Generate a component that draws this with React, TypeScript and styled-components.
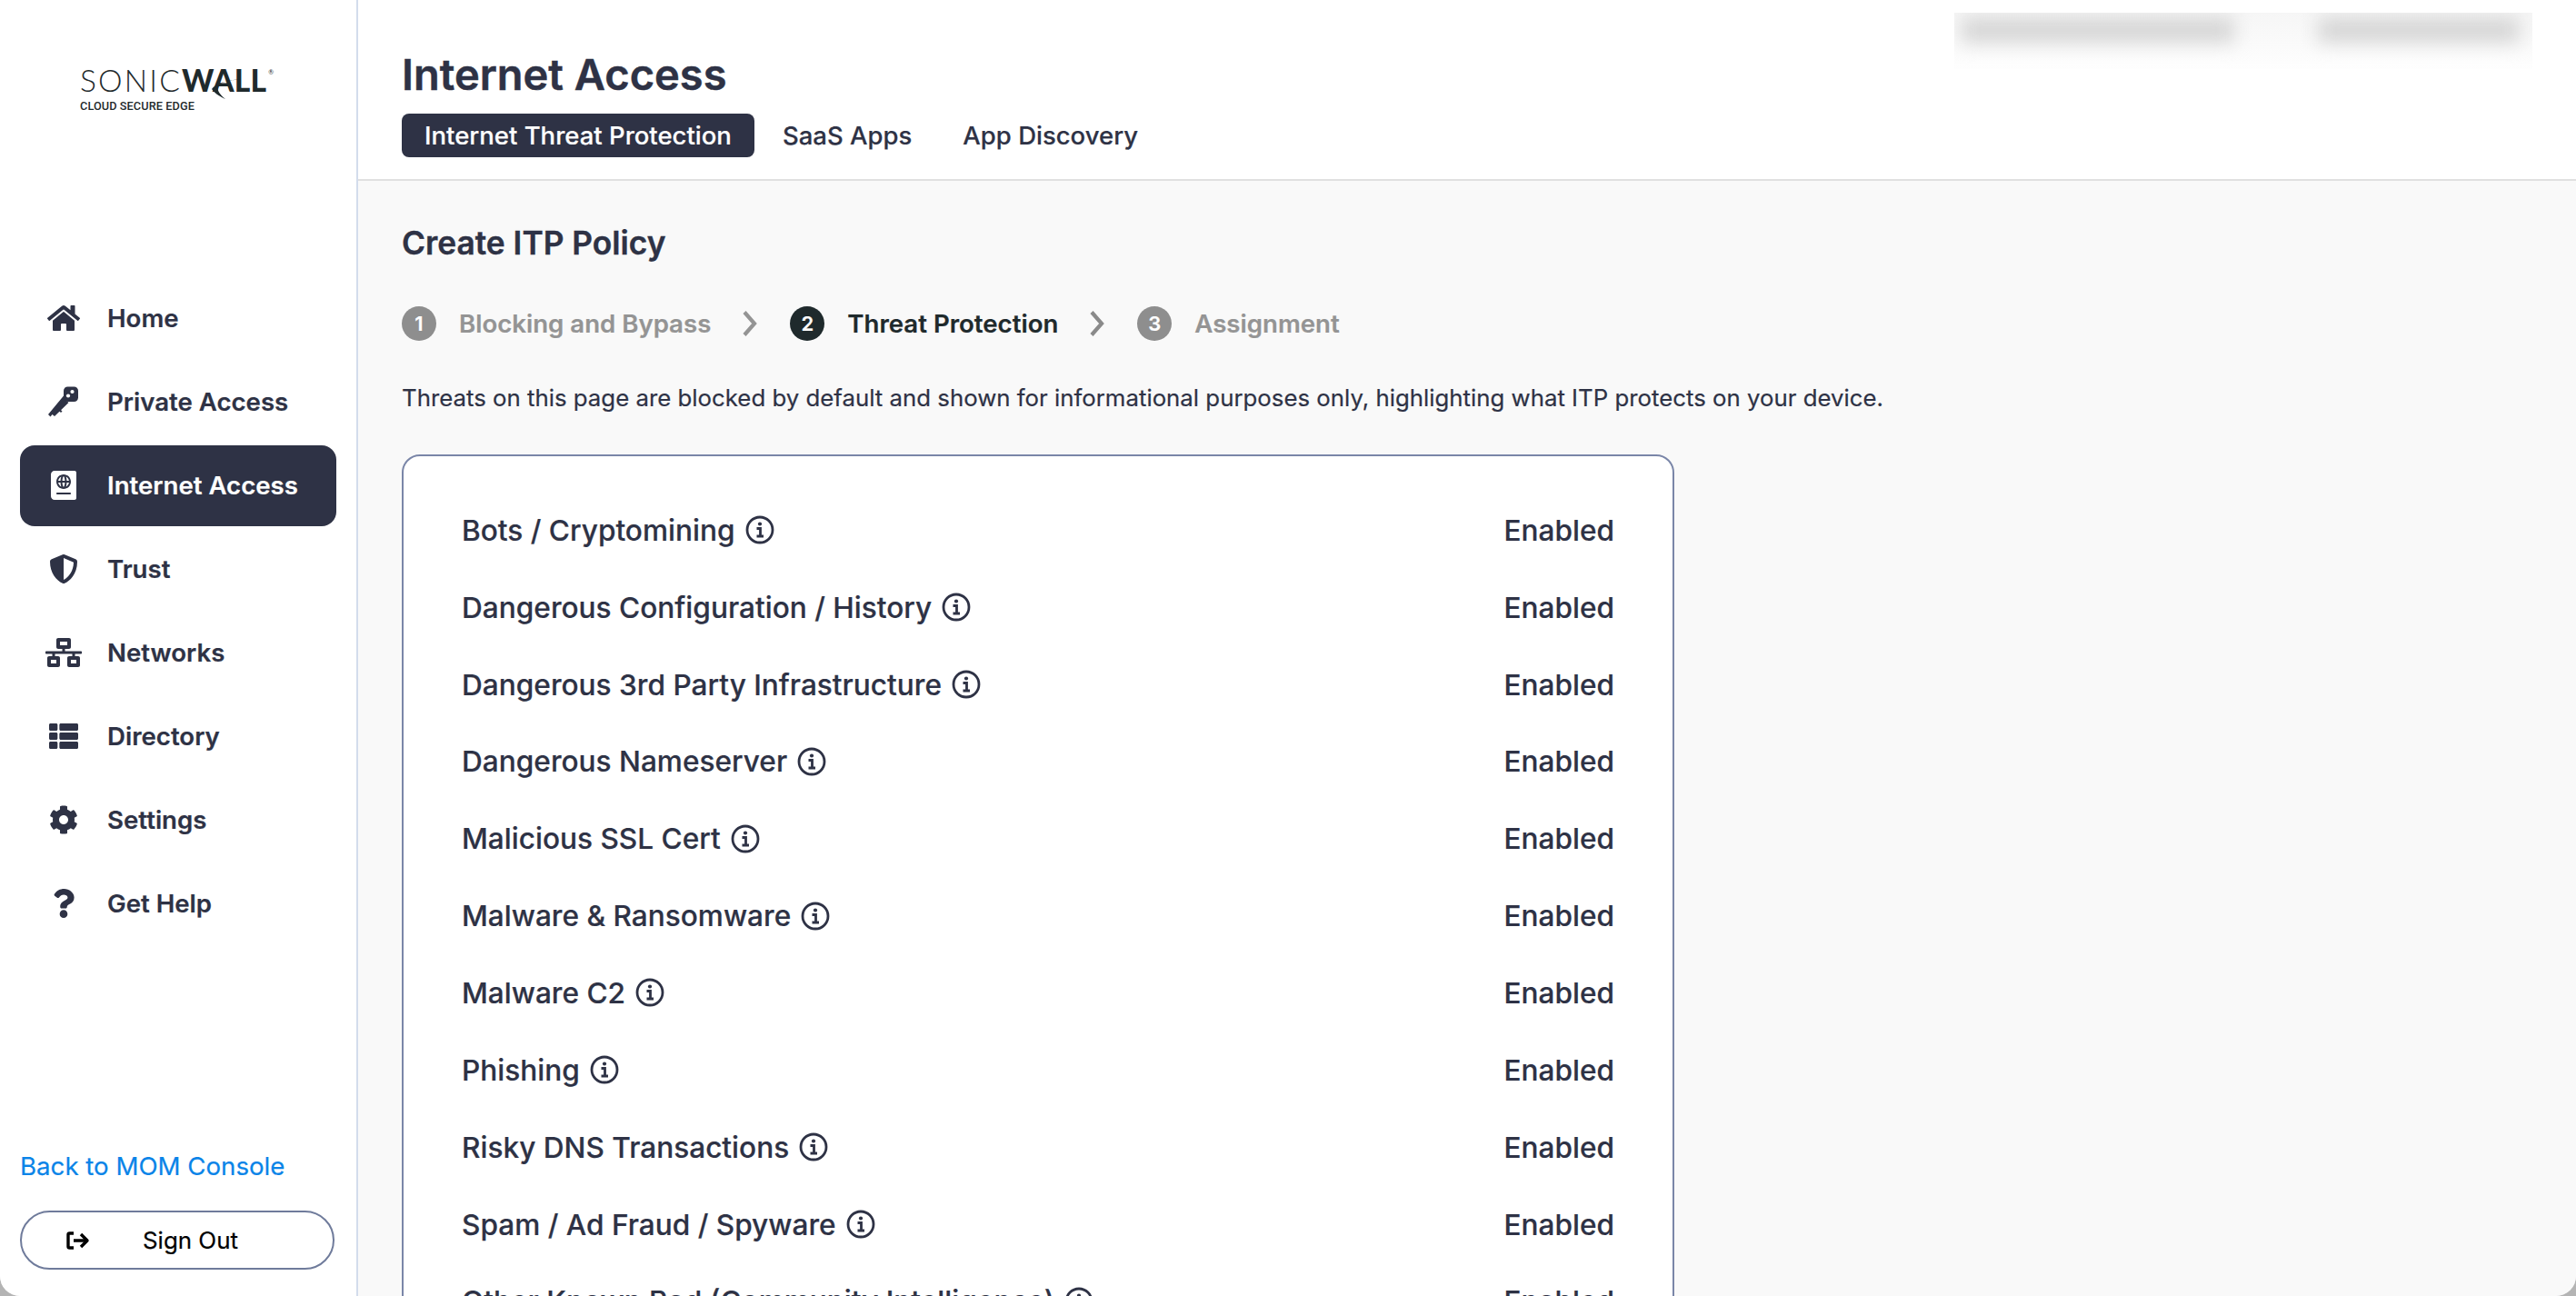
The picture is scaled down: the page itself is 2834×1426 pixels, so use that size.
import React from 'react';
import styled, { createGlobalStyle } from 'styled-components';
import { FaHome, FaPassport, FaShieldAlt, FaNetworkWired, FaThList, FaCog, FaQuestion } from 'react-icons/fa';

const Global = createGlobalStyle`
  html, body { margin: 0; padding: 0; height: 100%; overflow: hidden; background: #b4b4b4; }
  #root { height: 100%; }
  * { box-sizing: border-box; }
  body { font-family: Inter, "Liberation Sans", sans-serif; -webkit-text-stroke: 0.2px; }
`;

const Window = styled.div`
  display: flex;
  height: 1426px;
  width: 2834px;
  background: #fff;
  overflow: hidden;
  border-radius: 0 0 22px 22px;
  box-shadow: inset 0 0 0 0.5px #00000020;
`;

const Sidebar = styled.aside`
  flex: 0 0 394px;
  display: flex;
  flex-direction: column;
  background: #fff;
  border-right: 2px solid #d3dcec;
  padding: 0 22px;
`;

const LogoArea = styled.div`
  height: 306px;
  padding: 70px 0 0 66px;
  color: #1f2a2c;
  -webkit-text-stroke: 0;
`;

const LogoMark = styled.div`
  position: relative;
  display: flex;
  align-items: baseline;
  font-family: Lato, sans-serif;
  font-size: 33.5px;
  line-height: 36px;
  height: 36px;
`;

const LogoThin = styled.span`
  font-weight: 300;
  letter-spacing: 2.2px;
`;

const LogoBold = styled.span`
  font-weight: 900;
  letter-spacing: 0.2px;
`;

const LogoMarkR = styled.sup`
  font-size: 7px;
  line-height: 7px;
  font-weight: 400;
  align-self: flex-start;
  margin: 6px 0 0 2px;
`;

const Swoosh = styled.svg`
  position: absolute;
  left: 144px;
  top: 17px;
`;

const LogoSub = styled.div`
  font-family: Roboto, sans-serif;
  font-size: 12.7px;
  font-weight: 500;
  line-height: 16px;
  margin-top: 3px;
  letter-spacing: 0.1px;
`;

const Nav = styled.nav`
  display: flex;
  flex-direction: column;
  gap: 3px;
`;

const NavItem = styled.div<{ $active?: boolean }>`
  display: flex;
  align-items: center;
  height: 89px;
  width: 348px;
  padding: 0 0 1px 26px;
  gap: 26px;
  border-radius: 16px;
  font-size: 27.6px;
  font-weight: 600;
  color: ${p => (p.$active ? '#fff' : '#2e3245')};
  background: ${p => (p.$active ? '#2e3245' : 'transparent')};
`;

const NavIcon = styled.span`
  flex: 0 0 44px;
  display: flex;
  align-items: center;
  justify-content: center;
`;

const SideFooter = styled.div`
  margin-top: auto;
  padding-bottom: 29px;
`;

const BackLink = styled.a`
  display: block;
  font-size: 27.65px;
  line-height: 34px;
  color: #0a84e8;
  margin-bottom: 32px;
`;

const SignOut = styled.button`
  display: flex;
  align-items: center;
  width: 346px;
  height: 65px;
  padding: 0 0 0 49px;
  gap: 58px;
  background: #fff;
  border: 2px solid #6f7b9b;
  border-radius: 33px;
  font-family: inherit;
  font-size: 25.9px;
  color: #000;
`;

const Main = styled.main`
  flex: 1;
  min-width: 0;
  display: flex;
  flex-direction: column;
  background: #f9f9f9;
`;

const Header = styled.header`
  flex: 0 0 199px;
  display: flex;
  justify-content: space-between;
  background: #fff;
  border-bottom: 2px solid #e0e0e0;
  padding-left: 48px;
`;

const HeaderLeft = styled.div`
  display: flex;
  flex-direction: column;
`;

const Title = styled.h1`
  margin: 50px 0 0;
  font-size: 47px;
  line-height: 64px;
  font-weight: 600;
  color: #2e3245;
  -webkit-text-stroke: 0.5px;
`;

const Tabs = styled.div`
  display: flex;
  align-items: center;
  margin-top: 11px;
`;

const Tab = styled.div<{ $active?: boolean }>`
  height: 48px;
  display: flex;
  align-items: center;
  padding: 0 25px;
  margin-right: 6px;
  border-radius: 8px;
  font-size: 27.5px;
  font-weight: 500;
  color: ${p => (p.$active ? '#fff' : '#2e3245')};
  background: ${p => (p.$active ? '#2e3245' : 'transparent')};
`;

const BlurClip = styled.div`
  width: 636px;
  height: 62px;
  margin: 14px 48px 0 0;
  overflow: hidden;
  background: linear-gradient(#f6f6f6, #fefefe);
`;

const BlurRow = styled.div`
  display: flex;
  gap: 92px;
  padding: 5px 0 0 8px;
  filter: blur(10px);
`;

const BlurBar = styled.div<{ $w: number }>`
  width: ${p => p.$w}px;
  height: 28px;
  background: #d6d6d6;
`;

const Content = styled.div`
  flex: 1;
  min-height: 0;
  padding: 46px 0 0 48px;
`;

const SubTitle = styled.h2`
  margin: 0;
  font-size: 35.3px;
  line-height: 46px;
  font-weight: 600;
  color: #2e3245;
  -webkit-text-stroke: 0.4px;
`;

const Stepper = styled.div`
  display: flex;
  align-items: center;
  margin-top: 46px;
  height: 38px;
`;

const Step = styled.div<{ $active?: boolean }>`
  display: flex;
  align-items: center;
  gap: 25px;
  font-size: 27.6px;
  font-weight: 600;
  color: ${p => (p.$active ? '#1f2a2c' : '#949494')};
`;

const StepNum = styled.span<{ $active?: boolean }>`
  width: 38px;
  height: 38px;
  border-radius: 50%;
  display: flex;
  align-items: center;
  justify-content: center;
  font-size: 22px;
  font-weight: 600;
  color: #fff;
  background: ${p => (p.$active ? '#1f2a2c' : '#8e8e8e')};
`;

const StepChevron = styled.svg`
  margin: 0 35px 0 34px;
`;

const Description = styled.p`
  margin: 45px 0 0;
  font-size: 25.8px;
  line-height: 36px;
  font-weight: 400;
  color: #2e3245;
`;

const Card = styled.section`
  margin-top: 44px;
  width: 1400px;
  background: #fff;
  border: 2px solid #7a86a8;
  border-radius: 20px;
  padding: 39px 64px 30px 64px;
`;

const Row = styled.div`
  display: flex;
  align-items: center;
  justify-content: space-between;
  height: 84.85px;
  font-size: 31.6px;
  font-weight: 500;
  color: #2e3245;
`;

const RowLabel = styled.div`
  display: flex;
  align-items: center;
  gap: 11px;
`;

const Key = () => (
  <svg width="34" height="34" viewBox="0 0 34 34" fill="#2e3245">
    <rect x="17" y="0.500" width="16" height="16.500" rx="4.500" />
    <path d="M17 10.500L20 16 22.500 18 7 33l-2.500-2-2 2.500L0 31Z" />
    <path d="M11 23.500l4.500 4-1.500 1.500-4.500-4Z" />
    <circle cx="26.500" cy="6" r="2.100" fill="#fff" />
    <circle cx="22" cy="10.500" r="2.100" fill="#fff" />
  </svg>
);

const Exit = () => (
  <svg width="26" height="24" viewBox="0 0 26 24" fill="none" stroke="#000" strokeWidth="3.400">
    <path d="M8 4H3.500C2.500 4 2 4.500 2 5.500v13c0 1 .5 1.500 1.500 1.500H8" />
    <path d="M8 12h15" />
    <path d="M16 5l7 7-7 7" strokeLinejoin="round" />
  </svg>
);

const Info = () => (
  <svg width="32" height="32" viewBox="0 0 32 32" fill="none" stroke="#2e3245">
    <circle cx="16" cy="16" r="14" strokeWidth="2.800" />
    <circle cx="16" cy="9.500" r="2.100" fill="#2e3245" stroke="none" />
    <path d="M12.500 14.500H16.500V22.500M12.500 23H20" strokeWidth="2.800" />
  </svg>
);

const Chevron = ({ color }: { color: string }) => (
  <StepChevron width="18" height="28" viewBox="0 0 18 28" fill="none" stroke={color} strokeWidth="4.200">
    <path d="M3 1.500l11 12.500L3 26.500" />
  </StepChevron>
);

const navItems: { label: string; icon: React.ReactNode; active?: boolean }[] = [
  { label: 'Home', icon: <FaHome size={36} /> },
  { label: 'Private Access', icon: <Key /> },
  { label: 'Internet Access', icon: <FaPassport size={32} />, active: true },
  { label: 'Trust', icon: <FaShieldAlt size={32} /> },
  { label: 'Networks', icon: <FaNetworkWired size={40} /> },
  { label: 'Directory', icon: <FaThList size={32} /> },
  { label: 'Settings', icon: <FaCog size={32} /> },
  { label: 'Get Help', icon: <FaQuestion size={32} /> },
];

const threats = [
  'Bots / Cryptomining',
  'Dangerous Configuration / History',
  'Dangerous 3rd Party Infrastructure',
  'Dangerous Nameserver',
  'Malicious SSL Cert',
  'Malware & Ransomware',
  'Malware C2',
  'Phishing',
  'Risky DNS Transactions',
  'Spam / Ad Fraud / Spyware',
  'Other Known Bad (Community Intelligence)',
];

export default function App() {
  return (
    <>
      <Global />
      <Window>
        <Sidebar>
          <LogoArea>
            <LogoMark>
              <LogoThin>SONIC</LogoThin>
              <LogoBold>WALL</LogoBold>
              <LogoMarkR>®</LogoMarkR>
              <Swoosh width="34" height="22" viewBox="0 0 34 22" fill="#1f2a2c">
                <path d="M34 0C24 1 14 2 9 6 6 9 7 15 16 22 12 20 4 16 1 11 5 5 18 1 34 0Z" />
              </Swoosh>
            </LogoMark>
            <LogoSub>CLOUD SECURE EDGE</LogoSub>
          </LogoArea>
          <Nav>
            {navItems.map(n => (
              <NavItem key={n.label} $active={n.active}>
                <NavIcon>{n.icon}</NavIcon>
                {n.label}
              </NavItem>
            ))}
          </Nav>
          <SideFooter>
            <BackLink>Back to MOM Console</BackLink>
            <SignOut>
              <Exit />
              Sign Out
            </SignOut>
          </SideFooter>
        </Sidebar>
        <Main>
          <Header>
            <HeaderLeft>
              <Title>Internet Access</Title>
              <Tabs>
                <Tab $active>Internet Threat Protection</Tab>
                <Tab>SaaS Apps</Tab>
                <Tab>App Discovery</Tab>
              </Tabs>
            </HeaderLeft>
            <BlurClip>
              <BlurRow>
                <BlurBar $w={300} />
                <BlurBar $w={222} />
              </BlurRow>
            </BlurClip>
          </Header>
          <Content>
            <SubTitle>Create ITP Policy</SubTitle>
            <Stepper>
              <Step>
                <StepNum>1</StepNum>
                Blocking and Bypass
              </Step>
              <Chevron color="#949494" />
              <Step $active>
                <StepNum $active>2</StepNum>
                Threat Protection
              </Step>
              <Chevron color="#8a8a8a" />
              <Step>
                <StepNum>3</StepNum>
                Assignment
              </Step>
            </Stepper>
            <Description>
              Threats on this page are blocked by default and shown for informational purposes only, highlighting what ITP protects on your device.
            </Description>
            <Card>
              {threats.map(t => (
                <Row key={t}>
                  <RowLabel>
                    {t}
                    <Info />
                  </RowLabel>
                  Enabled
                </Row>
              ))}
            </Card>
          </Content>
        </Main>
      </Window>
    </>
  );
}
